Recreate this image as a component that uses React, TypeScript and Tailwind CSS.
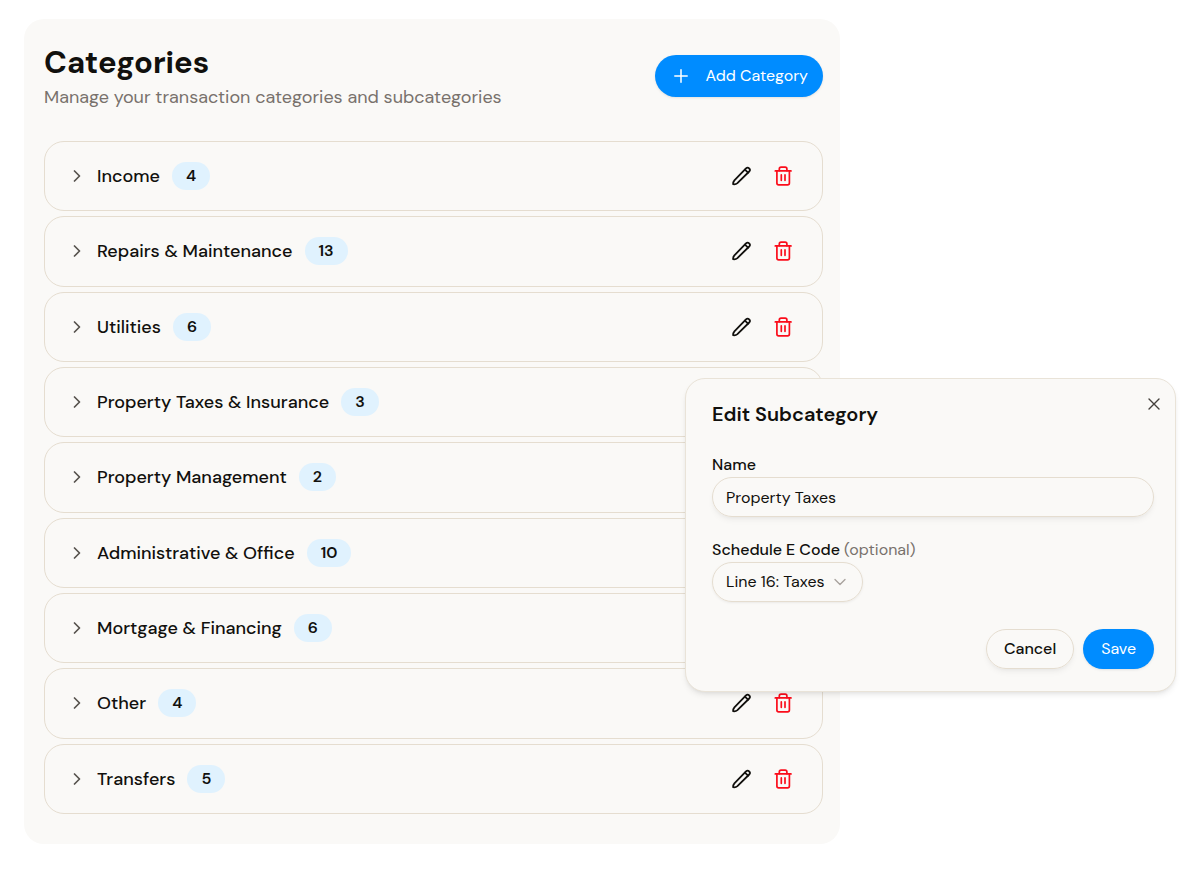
import { useId } from "react";

const categories = [
  { name: "Income", count: 4 },
  { name: "Repairs & Maintenance", count: 13 },
  { name: "Utilities", count: 6 },
  { name: "Property Taxes & Insurance", count: 3 },
  { name: "Property Management", count: 2 },
  { name: "Administrative & Office", count: 10 },
  { name: "Mortgage & Financing", count: 6 },
  { name: "Other", count: 4 },
  { name: "Transfers", count: 5 },
];

function Chevron({ className, weight }: { className: string; weight: number }) {
  return (
    <svg viewBox="0 0 24 24" fill="none" stroke="currentColor" strokeWidth={weight} strokeLinecap="round" strokeLinejoin="round" className={className} aria-hidden="true">
      <path d="m8.25 4.5 7.5 7.5-7.5 7.5" />
    </svg>
  );
}

function PencilIcon() {
  return (
    <svg viewBox="0 0 24 24" fill="none" stroke="currentColor" strokeWidth="1.8" strokeLinecap="round" strokeLinejoin="round" className="size-6" aria-hidden="true">
      <path d="M4.100 20.200C4 18.600 4.400 17.400 5.400 16.300L17 4.400a2.200 2.200 0 0 1 3.200 3.100L8.400 19.100C7.200 20.200 5.800 20.500 4.100 20.200Z" />
      <path d="m15.900 5.600 3.200 3.100" />
    </svg>
  );
}

function TrashIcon() {
  return (
    <svg viewBox="0 0 24 24" fill="none" stroke="currentColor" strokeWidth="1.7" strokeLinecap="round" strokeLinejoin="round" className="size-6" aria-hidden="true">
      <path d="M4.300 6.900h15.700" />
      <path d="M8.300 6.700V5a1.800 1.800 0 0 1 1.800-1.800h4a1.800 1.800 0 0 1 1.800 1.800v1.700" />
      <path d="M5.900 7v12a1.800 1.800 0 0 0 1.800 1.800h8.900a1.800 1.800 0 0 0 1.800-1.800V7" />
      <path d="M10.300 10.900v5.400M14 10.900v5.400" />
    </svg>
  );
}

function CategoryRow({ name, count }: { name: string; count: number }) {
  return (
    <li className="flex min-h-16 items-center rounded-[20px] border border-[#e5ddd0] pr-[21px] pl-6">
      <button type="button" aria-label={`Expand ${name}`} className="text-[#57534e]">
        <Chevron className="size-4" weight={2.6} />
      </button>
      <span className="ml-3 text-[18px] leading-7 font-medium">{name}</span>
      <span className="ml-3 rounded-full bg-[#e0f2fe] px-3.5 text-[16px] leading-7 font-semibold">{count}</span>
      <div className="ml-auto flex gap-[6px]">
        <button type="button" aria-label={`Edit ${name}`} className="grid size-9 place-items-center">
          <PencilIcon />
        </button>
        <button type="button" aria-label={`Delete ${name}`} className="grid size-9 place-items-center text-[#fb0d1b]">
          <TrashIcon />
        </button>
      </div>
    </li>
  );
}

function EditDialog() {
  const id = useId();
  return (
    <section
      role="dialog"
      aria-labelledby={`${id}-title`}
      className="absolute top-[378px] right-6 w-[491px] rounded-[20px] border border-[#e9e3d8] bg-[#faf9f7] pt-[21px] pr-[21px] pb-[22px] pl-[26px] shadow-md shadow-black/8"
    >
      <h2 id={`${id}-title`} className="text-[20px] leading-7 font-semibold">Edit Subcategory</h2>
      <button type="button" aria-label="Close" className="absolute top-[15px] right-[11px] grid size-5 place-items-center text-[#44403c]">
        <svg viewBox="0 0 12 12" fill="none" stroke="currentColor" strokeWidth="1.4" strokeLinecap="round" className="size-3" aria-hidden="true">
          <path d="m1 1 10 10M11 1 1 11" />
        </svg>
      </button>
      <form className="mt-[25px] flex flex-col" onSubmit={(e) => e.preventDefault()}>
        <label htmlFor={`${id}-name`} className="text-[16px] leading-6 font-medium">Name</label>
        <input
          id={`${id}-name`}
          defaultValue="Property Taxes"
          className="h-10 rounded-[20px] border border-[#e5ddd0] px-[13px] text-[16px] shadow-md shadow-black/5 outline-none"
        />
        <label htmlFor={`${id}-code`} className="mt-[21px] text-[16px] leading-6 font-medium">
          Schedule E Code <span className="font-normal text-[#78716c]">(optional)</span>
        </label>
        <div className="relative w-[151px]">
          <select
            id={`${id}-code`}
            className="h-10 w-full appearance-none rounded-[20px] border border-[#e5ddd0] bg-transparent pl-[13px] text-[16px] shadow-sm shadow-black/5 outline-none"
          >
            <option>Line 16: Taxes</option>
          </select>
          <Chevron className="pointer-events-none absolute top-3 right-[15px] size-4 rotate-90 text-[#a8a29e]" weight={2} />
        </div>
        <div className="mt-[27px] flex justify-end gap-[9px]">
          <button type="button" className="h-10 rounded-[20px] border border-[#e5ddd0] px-[17px] text-[16px] font-medium shadow-md shadow-black/5">Cancel</button>
          <button type="submit" className="h-10 rounded-[20px] bg-[#008cff] px-[18px] text-[16px] text-white shadow-sm shadow-black/8">Save</button>
        </div>
      </form>
    </section>
  );
}

export default function App() {
  return (
    <div className="relative flex min-h-screen bg-white px-6 pt-[19px] pb-[43px] font-['DM_Sans','Inter',sans-serif] text-[#11100d]">
      <main className="flex w-full max-w-[816px] flex-col rounded-[20px] bg-[#faf9f7] pt-6 pr-[17px] pb-[30px] pl-5">
        <header className="flex items-start justify-between">
          <div>
            <h1 className="text-[31px] leading-10 font-bold">Categories</h1>
            <p className="text-[18px] leading-7 text-[#78716c]">Manage your transaction categories and subcategories</p>
          </div>
          <button type="button" className="mt-3 flex h-[42px] items-center rounded-full bg-[#008cff] pr-[15px] pl-[19px] text-[16px] text-white shadow-sm shadow-black/8">
            <svg viewBox="0 0 14 14" fill="none" stroke="currentColor" strokeWidth="1.500" strokeLinecap="round" className="mr-[18px] size-3.5" aria-hidden="true">
              <path d="M7 .8v12.400M.8 7h12.400" />
            </svg>
            Add Category
          </button>
        </header>
        <ul className="mt-[30px] grid flex-1 auto-rows-fr gap-[5px]">
          {categories.map((c) => (
            <CategoryRow key={c.name} {...c} />
          ))}
        </ul>
      </main>
      <EditDialog />
    </div>
  );
}
